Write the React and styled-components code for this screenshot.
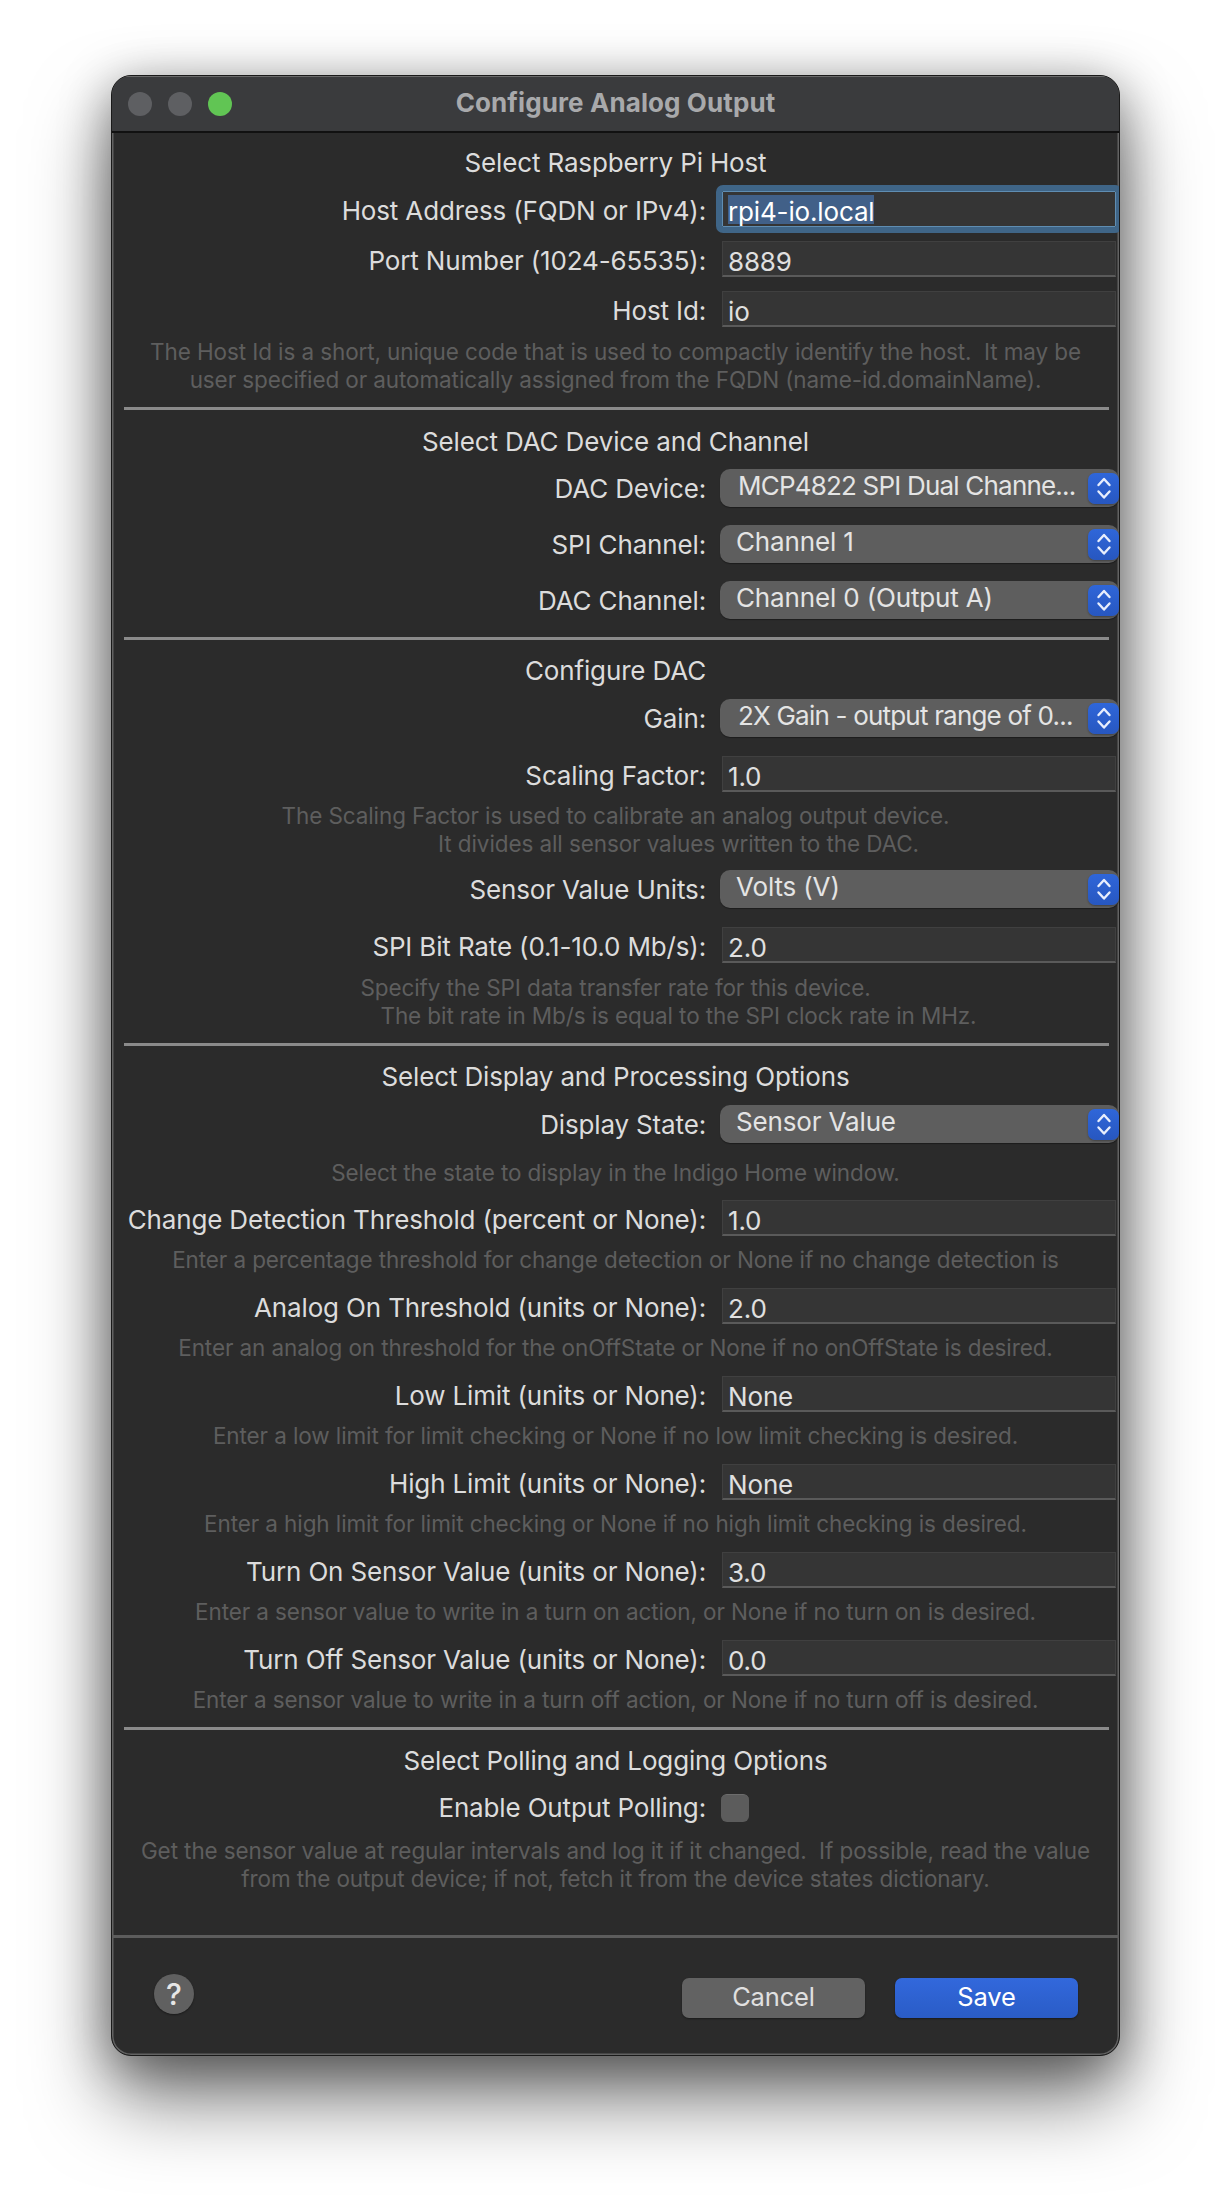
import React from "react";
import styled, { createGlobalStyle } from "styled-components";

const Global = createGlobalStyle`
  html, body { margin: 0; padding: 0; background: #fff; }
  body { font-family: Inter, "Liberation Sans", sans-serif; -webkit-font-smoothing: antialiased; }
`;

const Page = styled.div`
  width: 1232px;
  height: 2204px;
  padding: 75px 0 0 111px;
  box-sizing: border-box;
  overflow: hidden;
`;

const Window = styled.div`
  width: 1009px;
  height: 1981px;
  box-sizing: border-box;
  border-radius: 20px;
  background: #2b2b2b;
  overflow: hidden;
  display: flex;
  flex-direction: column;
  border: 1px solid #1a1a1a;
  box-shadow: inset 0 0 0 1.5px #626262, 0 44px 80px rgba(0, 0, 0, 0.5), 0 10px 50px rgba(0, 0, 0, 0.4);
`;

const TitleBar = styled.div`
  height: 54px;
  flex: none;
  background: #3a3b3d;
  border-top: 1px solid #6a6a6a;
  border-bottom: 2px solid #111;
  box-sizing: content-box;
  display: flex;
  align-items: center;
  position: relative;
  padding-left: 16px;
  gap: 16px;
`;

const Light = styled.span`
  width: 24px;
  height: 24px;
  border-radius: 50%;
  background: ${(p) => p.$color};
`;

const WindowTitle = styled.div`
  position: absolute;
  left: 0;
  right: 0;
  top: 10px;
  text-align: center;
  font-size: 26px;
  line-height: 32px;
  font-weight: 700;
  color: #a8a9ab;
  letter-spacing: 0.1px;
`;

const Form = styled.div`
  flex: none;
  height: 1802px;
  box-sizing: border-box;
  padding-left: 13px;
  display: flex;
  flex-direction: column;
`;

const SectionTitle = styled.div`
  height: 34px;
  line-height: 34px;
  margin-top: ${(p) => p.$mt}px;
  margin-right: 13px;
  text-align: center;
  font-size: 26px;
  color: #dcdcdc;
  letter-spacing: -0.15px;
  white-space: nowrap;
`;

const Row = styled.div`
  display: flex;
  align-items: flex-start;
  margin-top: ${(p) => p.$mt}px;
  height: ${(p) => p.$h}px;
  flex: none;
`;

const Label = styled.label`
  width: 581px;
  flex: none;
  text-align: right;
  font-size: 26px;
  line-height: 40px;
  color: #dcdcdc;
  letter-spacing: -0.15px;
  white-space: nowrap;
`;

const FieldLabel = styled(Label)`
  line-height: 39px;
`;

const CheckLabel = styled(Label)`
  line-height: 28px;
`;

const Field = styled.div`
  position: relative;
  flex: none;
  margin-left: 16px;
  width: 394px;
  height: 36px;
  box-sizing: border-box;
  background: #353535;
  border: 1px solid #404040;
  border-bottom: 2px solid #5a5a5a;
  padding: 4px 0 0 5px;
  font-size: 26px;
  line-height: 32px;
  color: #e0e0e0;
  letter-spacing: -0.15px;
  white-space: nowrap;
  overflow: hidden;
  ${(p) => p.$focused && `
    overflow: visible;
    outline: 6px solid #3f6587;
    border: 1px solid #5f8db2;
    border-radius: 1px;
    color: #fff;
  `}
`;

const Selected = styled.span`
  background: #416088;
  display: inline-block;
  height: 29px;
  margin-top: -1px;
  line-height: 34px;
  vertical-align: top;
`;

const Popup = styled.div`
  position: relative;
  flex: none;
  margin-left: 14px;
  width: 399px;
  height: 38px;
  box-sizing: border-box;
  background: #5e5e5e;
  border-radius: 10px;
  padding-left: ${(p) => (p.$tight ? 18 : 16)}px;
  font-size: 26px;
  line-height: 34px;
  color: #e4e4e4;
  letter-spacing: ${(p) => (p.$tight ? -0.8 : -0.15)}px;
  white-space: nowrap;
  box-shadow: 0 1px 1px rgba(0, 0, 0, 0.35);
`;

const Stepper = styled.span`
  position: absolute;
  right: 0;
  top: 4px;
  width: 31px;
  height: 31px;
  border-radius: 7px;
  background: linear-gradient(#2f66d9, #2757c0);
  box-shadow: 0 1px 2px rgba(0, 0, 0, 0.3);
  display: flex;
  align-items: center;
  justify-content: center;
`;

const Hint = styled.div`
  margin-top: ${(p) => p.$mt}px;
  margin-right: 13px;
  flex: none;
  text-align: center;
  font-size: 22.5px;
  line-height: 28px;
  color: #5e5e5e;
  letter-spacing: -0.1px;
  white-space: pre;
`;

const HintIndent = styled.span`
  padding-left: 126px;
`;

const Separator = styled.div`
  height: 3px;
  flex: none;
  margin-top: ${(p) => p.$mt}px;
  margin-left: -1px;
  margin-right: 10px;
  background: #8a8a8a;
`;

const Check = styled.span`
  width: 28px;
  height: 28px;
  margin-left: 15px;
  border-radius: 6px;
  background: #5c5c5c;
  box-sizing: border-box;
  border-top: 1px solid #6c6c6c;
  flex: none;
`;

const Footer = styled.div`
  flex: 1;
  border-top: 3px solid #5c5c5c;
  display: flex;
  position: relative;
  align-items: flex-start;
  padding: 40px 41px 0 42px;
`;

const Help = styled.div`
  width: 40px;
  height: 40px;
  margin-top: -4px;
  border-radius: 50%;
  background: #606060;
  color: #e6e6e6;
  font-size: 30px;
  font-weight: 500;
  line-height: 40px;
  text-align: center;
  box-shadow: 0 1px 2px rgba(0, 0, 0, 0.4);
`;

const Spacer = styled.div`
  flex: 1;
`;

const Button = styled.div`
  width: 183px;
  height: 40px;
  margin-left: 30px;
  border-radius: 7px;
  text-align: center;
  font-size: 25.5px;
  line-height: 38px;
  letter-spacing: -0.15px;
  color: ${(p) => (p.$primary ? "#fff" : "#e0e0e0")};
  background: ${(p) => (p.$primary ? "linear-gradient(#3268dc, #2a5cc6)" : "#626262")};
  box-shadow: 0 1px 2px rgba(0, 0, 0, 0.4);
`;

const Chevrons = () => (
  <svg width="18" height="25" viewBox="0 0 18 25" fill="none" stroke="#e8eefc" strokeWidth="2.4" strokeLinecap="round" strokeLinejoin="round">
    <path d="M3.5 9 L9 3 L14.5 9" />
    <path d="M3.5 15.5 L9 21.5 L14.5 15.5" />
  </svg>
);

const TextRow = ({ label, value, mt, focused }) => (
  <Row $mt={mt} $h={36}>
    <FieldLabel>{label}</FieldLabel>
    <Field $focused={focused}>{focused ? <Selected>{value}</Selected> : value}</Field>
  </Row>
);

const SelectRow = ({ label, value, mt, tight }) => (
  <Row $mt={mt} $h={38}>
    <Label>{label}</Label>
    <Popup $tight={tight}>
      {value}
      <Stepper><Chevrons /></Stepper>
    </Popup>
  </Row>
);

export default function App() {
  return (
    <Page>
      <Global />
      <Window>
        <TitleBar>
          <Light $color="#5e5f62" />
          <Light $color="#5e5f62" />
          <Light $color="#61c554" />
          <WindowTitle>Configure Analog Output</WindowTitle>
        </TitleBar>
        <Form>
          <SectionTitle $mt={13}>Select Raspberry Pi Host</SectionTitle>
          <TextRow mt={11} label="Host Address (FQDN or IPv4):" value="rpi4-io.local" focused />
          <TextRow mt={14} label="Port Number (1024-65535):" value="8889" />
          <TextRow mt={14} label="Host Id:" value="io" />
          <Hint $mt={11}>{"The Host Id is a short, unique code that is used to compactly identify the host.  It may be\nuser specified or automatically assigned from the FQDN (name-id.domainName)."}</Hint>
          <Separator $mt={13} />

          <SectionTitle $mt={15}>Select DAC Device and Channel</SectionTitle>
          <SelectRow mt={10} label="DAC Device:" value="MCP4822 SPI Dual Channe..." tight />
          <SelectRow mt={18} label="SPI Channel:" value="Channel 1" />
          <SelectRow mt={18} label="DAC Channel:" value="Channel 0 (Output A)" />
          <Separator $mt={18} />

          <SectionTitle $mt={14}>Configure DAC</SectionTitle>
          <SelectRow mt={11} label="Gain:" value="2X Gain - output range of 0..." tight />
          <TextRow mt={19} label="Scaling Factor:" value="1.0" />
          <Hint $mt={10}>{"The Scaling Factor is used to calibrate an analog output device.\n"}<HintIndent>It divides all sensor values written to the DAC.</HintIndent></Hint>
          <SelectRow mt={12} label="Sensor Value Units:" value="Volts (V)" />
          <TextRow mt={19} label="SPI Bit Rate (0.1-10.0 Mb/s):" value="2.0" />
          <Hint $mt={11}>{"Specify the SPI data transfer rate for this device.\n"}<HintIndent>The bit rate in Mb/s is equal to the SPI clock rate in MHz.</HintIndent></Hint>
          <Separator $mt={13} />

          <SectionTitle $mt={14}>Select Display and Processing Options</SectionTitle>
          <SelectRow mt={11} label="Display State:" value="Sensor Value" />
          <Hint $mt={16}>Select the state to display in the Indigo Home window.</Hint>
          <TextRow mt={13} label="Change Detection Threshold (percent or None):" value="1.0" />
          <Hint $mt={10}>Enter a percentage threshold for change detection or None if no change detection is</Hint>
          <TextRow mt={14} label="Analog On Threshold (units or None):" value="2.0" />
          <Hint $mt={10}>Enter an analog on threshold for the onOffState or None if no onOffState is desired.</Hint>
          <TextRow mt={14} label="Low Limit (units or None):" value="None" />
          <Hint $mt={10}>Enter a low limit for limit checking or None if no low limit checking is desired.</Hint>
          <TextRow mt={14} label="High Limit (units or None):" value="None" />
          <Hint $mt={10}>Enter a high limit for limit checking or None if no high limit checking is desired.</Hint>
          <TextRow mt={14} label="Turn On Sensor Value (units or None):" value="3.0" />
          <Hint $mt={10}>Enter a sensor value to write in a turn on action, or None if no turn on is desired.</Hint>
          <TextRow mt={14} label="Turn Off Sensor Value (units or None):" value="0.0" />
          <Hint $mt={10}>Enter a sensor value to write in a turn off action, or None if no turn off is desired.</Hint>
          <Separator $mt={13} />

          <SectionTitle $mt={14}>Select Polling and Logging Options</SectionTitle>
          <Row $mt={16} $h={28}>
            <CheckLabel>Enable Output Polling:</CheckLabel>
            <Check />
          </Row>
          <Hint $mt={15}>{"Get the sensor value at regular intervals and log it if it changed.  If possible, read the value\nfrom the output device; if not, fetch it from the device states dictionary."}</Hint>
        </Form>
        <Footer>
          <Help>?</Help>
          <Spacer />
          <Button>Cancel</Button>
          <Button $primary>Save</Button>
        </Footer>
      </Window>
    </Page>
  );
}
